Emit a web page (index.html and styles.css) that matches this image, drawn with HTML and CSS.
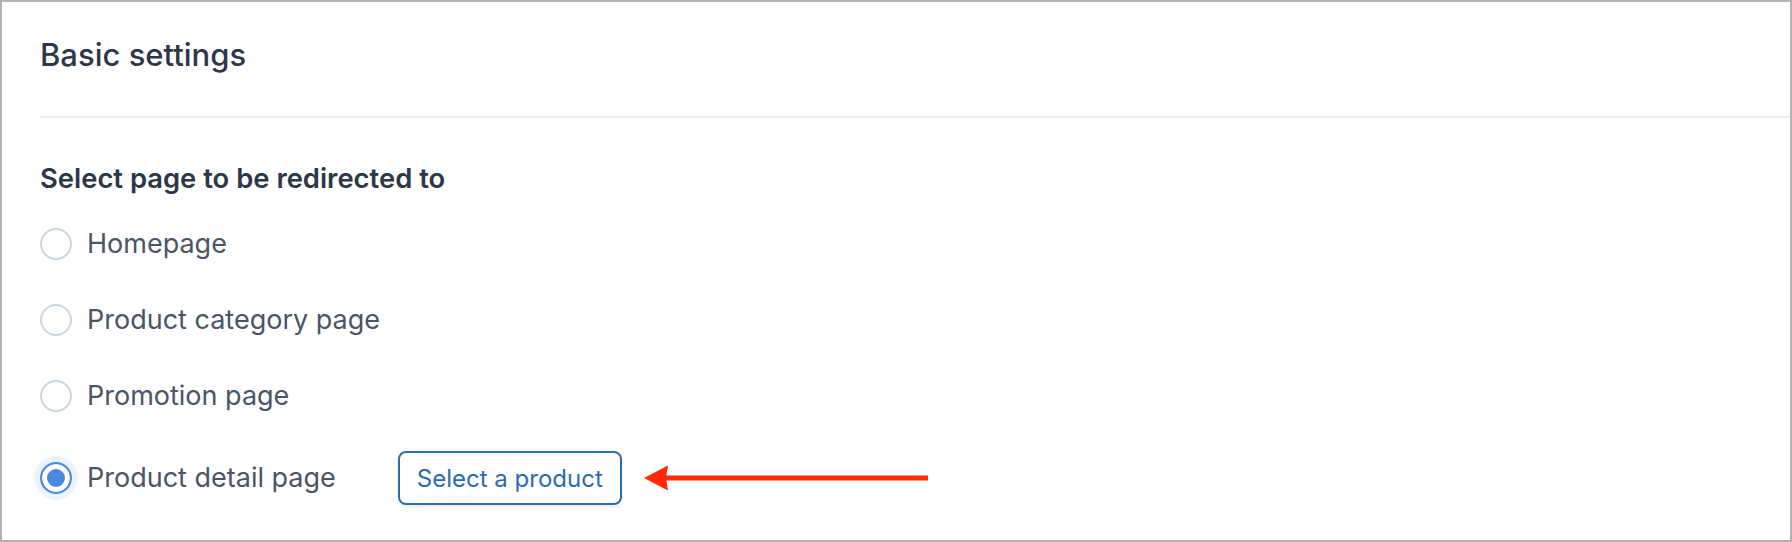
FILE: index.html
```html
<!DOCTYPE html>
<html lang="en">
<head>
<meta charset="utf-8">
<title>Basic settings</title>
<link rel="stylesheet" href="styles.css">
</head>
<body>
<div class="panel">
  <div class="header">
    <h2 class="title">Basic settings</h2>
  </div>
  <div class="body">
    <h3 class="group-label">Select page to be redirected to</h3>
    <div class="options">
      <label class="option">
        <span class="radio"></span>
        <span class="option-text">Homepage</span>
      </label>
      <label class="option">
        <span class="radio"></span>
        <span class="option-text">Product category page</span>
      </label>
      <label class="option">
        <span class="radio"></span>
        <span class="option-text">Promotion page</span>
      </label>
      <div class="option option-selected">
        <label class="option-main">
          <span class="radio radio-checked"></span>
          <span class="option-text">Product detail page</span>
        </label>
        <button class="btn-outline" type="button">Select a product</button>
        <svg class="arrow" width="290" height="28" viewBox="0 0 290 28" aria-hidden="true">
          <rect x="22" y="11.5" width="262" height="5" fill="#ff2a0a"/>
          <path d="M0 14 L24 1.5 L22 14 L24 26.5 Z" fill="#ff2a0a"/>
        </svg>
      </div>
    </div>
  </div>
</div>
</body>
</html>
```
FILE: styles.css
```css
html, body {
  margin: 0;
  padding: 0;
  background: #ffffff;
}

body {
  font-family: Inter, "Noto Sans", "Liberation Sans", sans-serif;
  color: #2d3748;
}

.panel {
  box-sizing: border-box;
  width: 1792px;
  height: 542px;
  border: 2px solid #b3b3b3;
  background: #ffffff;
  overflow: hidden;
}

.header {
  margin-left: 38px;
  padding: 34px 0 42px;
  border-bottom: 2px solid #ececec;
}

.title {
  margin: 0;
  font-size: 31px;
  line-height: 38px;
  font-weight: 500;
  color: #2d3748;
}

.body {
  padding: 0 38px;
}

.group-label {
  margin: 43px 0 0;
  font-size: 27.4px;
  line-height: 34px;
  font-weight: 600;
  color: #2d3748;
}

.options {
  display: flex;
  flex-direction: column;
  gap: 44px;
  margin-top: 33px;
}

.option,
.option-main {
  display: flex;
  align-items: center;
  gap: 15px;
  height: 32px;
}

.option-selected {
  gap: 0;
  height: 54px;
  margin-top: -5px;
}

.radio {
  box-sizing: border-box;
  flex: none;
  width: 32px;
  height: 32px;
  border: 2px solid #cbd5e0;
  border-radius: 50%;
  background: #ffffff;
}

.radio-checked {
  border-color: #4a89e0;
  background: #4a89e0;
  box-shadow: inset 0 0 0 5px #ffffff, 0 0 0 6px #ebf4ff;
}

.option-text {
  font-size: 27px;
  line-height: 34px;
  color: #4a5568;
}

.btn-outline {
  box-sizing: border-box;
  margin-left: 62px;
  height: 54px;
  padding: 0 17px;
  border: 2px solid #2f6cb3;
  border-radius: 8px;
  background: #ffffff;
  box-shadow: 0 3px 3px rgba(0, 0, 0, 0.06);
  font-family: Inter, "Noto Sans", "Liberation Sans", sans-serif;
  font-size: 24px;
  color: #2b6cb0;
}

.arrow {
  display: block;
  margin-left: 22px;
}
```
